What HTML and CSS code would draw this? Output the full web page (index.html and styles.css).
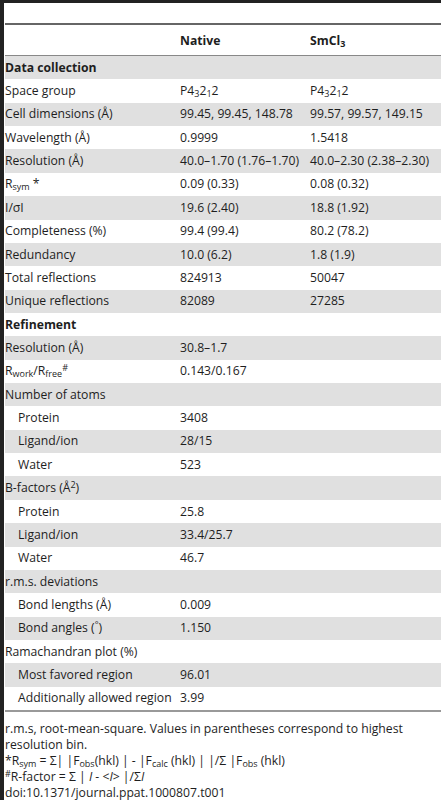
FILE: index.html
```html
<!DOCTYPE html>
<html lang="en">
<head>
	<title>Table 1</title>
	<meta charset="UTF-8">
	<link rel="stylesheet" href="styles.css">
</head>
<body>
	<div class="frame">
		<table class="stats">
			<thead>
				<tr>
					<th></th>
					<th>Native</th>
					<th>SmCl<sub>3</sub></th>
				</tr>
			</thead>
			<tbody>
				<tr class="shade"><td class="section">Data collection</td><td></td><td></td></tr>
				<tr><td>Space group</td><td>P4<sub>3</sub>2<sub>1</sub>2</td><td>P4<sub>3</sub>2<sub>1</sub>2</td></tr>
				<tr class="shade"><td>Cell dimensions (Å)</td><td>99.45, 99.45, 148.78</td><td>99.57, 99.57, 149.15</td></tr>
				<tr><td>Wavelength (Å)</td><td>0.9999</td><td>1.5418</td></tr>
				<tr class="shade"><td>Resolution (Å)</td><td>40.0–1.70 (1.76–1.70)</td><td>40.0–2.30 (2.38–2.30)</td></tr>
				<tr><td>R<sub>sym</sub> *</td><td>0.09 (0.33)</td><td>0.08 (0.32)</td></tr>
				<tr class="shade"><td>I/σI</td><td>19.6 (2.40)</td><td>18.8 (1.92)</td></tr>
				<tr><td>Completeness (%)</td><td>99.4 (99.4)</td><td>80.2 (78.2)</td></tr>
				<tr class="shade"><td>Redundancy</td><td>10.0 (6.2)</td><td>1.8 (1.9)</td></tr>
				<tr><td>Total reflections</td><td>824913</td><td>50047</td></tr>
				<tr class="shade"><td>Unique reflections</td><td>82089</td><td>27285</td></tr>
				<tr><td class="section">Refinement</td><td></td><td></td></tr>
				<tr class="shade"><td>Resolution (Å)</td><td>30.8–1.7</td><td></td></tr>
				<tr><td>R<sub>work</sub>/R<sub>free</sub><sup>#</sup></td><td>0.143/0.167</td><td></td></tr>
				<tr class="shade"><td>Number of atoms</td><td></td><td></td></tr>
				<tr><td class="sub">Protein</td><td>3408</td><td></td></tr>
				<tr class="shade"><td class="sub">Ligand/ion</td><td>28/15</td><td></td></tr>
				<tr><td class="sub">Water</td><td>523</td><td></td></tr>
				<tr class="shade"><td>B-factors (Å<sup>2</sup>)</td><td></td><td></td></tr>
				<tr><td class="sub">Protein</td><td>25.8</td><td></td></tr>
				<tr class="shade"><td class="sub">Ligand/ion</td><td>33.4/25.7</td><td></td></tr>
				<tr><td class="sub">Water</td><td>46.7</td><td></td></tr>
				<tr class="shade"><td>r.m.s. deviations</td><td></td><td></td></tr>
				<tr><td class="sub">Bond lengths (Å)</td><td>0.009</td><td></td></tr>
				<tr class="shade"><td class="sub">Bond angles (<sup>°</sup>)</td><td>1.150</td><td></td></tr>
				<tr><td>Ramachandran plot (%)</td><td></td><td></td></tr>
				<tr class="shade"><td class="sub">Most favored region</td><td>96.01</td><td></td></tr>
				<tr><td class="sub">Additionally allowed region</td><td>3.99</td><td></td></tr>
			</tbody>
		</table>

		<div class="notes">
			<p>r.m.s, root-mean-square. Values in parentheses correspond to highest resolution bin.</p>
			<p>*R<sub>sym</sub> = Σ| |F<sub>obs</sub>(hkl) | - |F<sub>calc</sub> (hkl) | |/Σ |F<sub>obs</sub> (hkl)</p>
			<p><sup>#</sup>R-factor = Σ | <i>I</i> - &lt;<i>I</i>&gt; |/Σ<i>I</i></p>
			<p>doi:10.1371/journal.ppat.1000807.t001</p>
		</div>
	</div>
</body>
</html>
```

FILE: styles.css
```css
body {
	margin: 0;
	padding: 0;
	background: #fff;
	font-family: "Open Sans", sans-serif;
	font-size: 12.2px;
	color: #1e1e1e;
}
.frame {
	box-sizing: border-box;
	height: 800px;
	overflow: hidden;
	border-top: 3px solid #222;
	border-left: 4px solid #222;
	padding-top: 20px;
	padding-left: 1px;
}

/* table */
.stats {
	width: 100%;
	table-layout: fixed;
	border-collapse: collapse;
	border-top: 2px solid #666;
	border-bottom: 2px solid #999;
}
.stats th {
	height: 30px;
	text-align: left;
	font-weight: bold;
	border-bottom: 1px solid #888;
	padding: 0;
}
.stats td {
	height: 23.36px;
	padding: 0;
	white-space: nowrap;
	line-height: 16px;
}
.stats th:first-child {
	width: 175px;
}
.stats th:nth-child(2) {
	width: 130px;
}
.stats tr.shade td {
	background: #e0e0e0;
}
.stats td.section {
	font-weight: bold;
}
.stats td.sub {
	padding-left: 13px;
}
sub, sup {
	font-size: 9px;
	line-height: 0;
	vertical-align: baseline;
	position: relative;
}
sub {
	top: 2px;
}
sup {
	top: -4px;
}

/* footnotes */
.notes {
	padding-top: 9px;
	line-height: 16px;
}
.notes p {
	margin: 0;
}
```
